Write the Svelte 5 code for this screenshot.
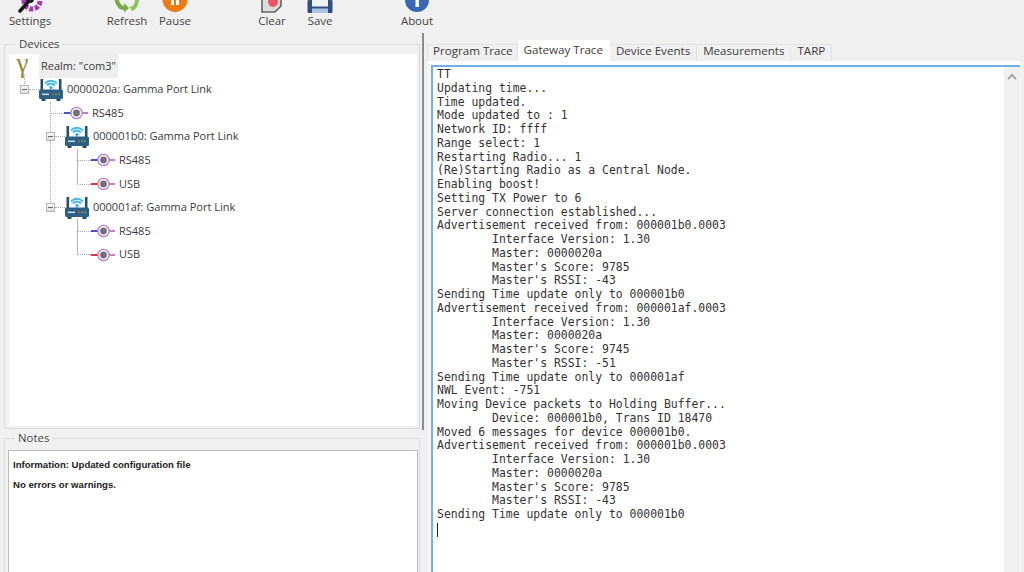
<script>
  const trace = [
    "TT",
    "Updating time...",
    "Time updated.",
    "Mode updated to : 1",
    "Network ID: ffff",
    "Range select: 1",
    "Restarting Radio... 1",
    "(Re)Starting Radio as a Central Node.",
    "Enabling boost!",
    "Setting TX Power to 6",
    "Server connection established...",
    "Advertisement received from: 000001b0.0003",
    "\tInterface Version: 1.30",
    "\tMaster: 0000020a",
    "\tMaster's Score: 9785",
    "\tMaster's RSSI: -43",
    "Sending Time update only to 000001b0",
    "Advertisement received from: 000001af.0003",
    "\tInterface Version: 1.30",
    "\tMaster: 0000020a",
    "\tMaster's Score: 9745",
    "\tMaster's RSSI: -51",
    "Sending Time update only to 000001af",
    "NWL Event: -751",
    "Moving Device packets to Holding Buffer...",
    "\tDevice: 000001b0, Trans ID 18470",
    "Moved 6 messages for device 000001b0.",
    "Advertisement received from: 000001b0.0003",
    "\tInterface Version: 1.30",
    "\tMaster: 0000020a",
    "\tMaster's Score: 9785",
    "\tMaster's RSSI: -43",
    "Sending Time update only to 000001b0"
  ];
  const tabs = ["Program Trace", "Gateway Trace", "Device Events", "Measurements", "TARP"];
  const gateways = [
    { name: "000001b0: Gamma Port Link", ports: ["RS485", "USB"] },
    { name: "000001af: Gamma Port Link", ports: ["RS485", "USB"] }
  ];
</script>

{#snippet router()}
  <svg class="ico" width="24" height="23" viewBox="0 0 24 23">
    <path d="M6 5.5 Q12 0 18 5.5" fill="none" stroke="#45b6ea" stroke-width="2" />
    <path d="M8 7.5 Q12 3.6 16 7.5" fill="none" stroke="#45b6ea" stroke-width="2" />
    <path d="M9.8 9.4 L12 7.6 L14.2 9.4 L12 12Z" fill="#45b6ea" />
    <rect x="1.5" y="1" width="2.6" height="12" fill="#23506f" />
    <rect x="19.9" y="1" width="2.6" height="12" fill="#23506f" />
    <rect x="0" y="11.5" width="24" height="9.5" rx="1.5" fill="#2f5f85" />
    <rect x="2.5" y="21" width="4" height="2" fill="#23506f" />
    <rect x="17.5" y="21" width="4" height="2" fill="#23506f" />
    <rect x="3" y="15.5" width="7" height="1.6" fill="#c4dbe9" />
    <circle cx="14" cy="16.3" r="1" fill="#c9584a" />
    <circle cx="17" cy="16.3" r="1" fill="#63a85c" />
    <circle cx="20" cy="16.3" r="1" fill="#63a85c" />
  </svg>
{/snippet}

{#snippet port(color)}
  <svg class="ico" width="24" height="14" viewBox="0 0 24 14">
    <line x1="0" y1="7" x2="9" y2="7" stroke={color} stroke-width="2" />
    <line x1="18" y1="7" x2="24" y2="7" stroke="#a94bb0" stroke-width="1.4" />
    <circle cx="12.5" cy="7" r="5.6" fill="#fff" stroke="#b878c0" stroke-width="1.3" />
    <circle cx="12.5" cy="7" r="3.4" fill="#70707a" />
  </svg>
{/snippet}

{#snippet node(label, color)}
  <div class="row port">
    <span class="hook"></span>
    {@render port(color)}
    <span class="label">{label}</span>
  </div>
{/snippet}

<div class="window">
  <header class="toolbar">
    <div class="tool settings">
      <svg width="26" height="13" viewBox="0 0 26 13">
        <circle cx="15" cy="1" r="8" fill="none" stroke="#a23bb5" stroke-width="5" stroke-dasharray="4 1.6" />
        <path d="M3 11 L12 1" stroke="#1a1a1a" stroke-width="3.6" stroke-linecap="round" />
        <circle cx="13" cy="-1" r="4" fill="#1a1a1a" />
      </svg>
      <span>Settings</span>
    </div>
    <div class="tool refresh">
      <svg width="26" height="13" viewBox="0 0 26 13">
        <path d="M0.5 0 L5 0 Q6 5 10 6 L10 3 L15 8 L10 12.5 L10 10 Q3 10 0.5 0Z" fill="#76ad43" />
        <path d="M25 0 L21 0 Q21 5 17 7 L15 6 L18 11 Q24 9 25 0Z" fill="#8fc25b" />
      </svg>
      <span>Refresh</span>
    </div>
    <div class="tool pause">
      <svg width="26" height="13" viewBox="0 0 26 13">
        <circle cx="13" cy="-0.5" r="12.5" fill="#ee7a12" />
        <rect x="9" y="0" width="3" height="5" fill="#fff" />
        <rect x="14" y="0" width="3" height="5" fill="#fff" />
      </svg>
      <span>Pause</span>
    </div>
    <div class="tool clear">
      <svg width="24" height="13" viewBox="0 0 24 13">
        <path d="M2 0 V12 H15 L21 6 V0" fill="#dcdcdc" stroke="#666" stroke-width="1.6" />
        <circle cx="13" cy="2" r="5" fill="#e85562" />
      </svg>
      <span>Clear</span>
    </div>
    <div class="tool save">
      <svg width="26" height="13" viewBox="0 0 26 13">
        <rect x="0.5" y="0" width="25" height="13" rx="1" fill="#34507f" />
        <rect x="5" y="0" width="16" height="6.5" fill="#eef3f8" />
        <rect x="5" y="8.5" width="16" height="4.5" fill="#a9c4e4" />
      </svg>
      <span>Save</span>
    </div>
    <div class="tool about">
      <svg width="26" height="13" viewBox="0 0 26 13">
        <circle cx="13" cy="0" r="12" fill="#3a67b4" />
        <rect x="11.5" y="0" width="3.4" height="7" fill="#fff" />
      </svg>
      <span>About</span>
    </div>
  </header>

  <main class="panes">
    <div class="left">
      <fieldset class="group devices">
        <legend>Devices</legend>
        <div class="tree">
          <div class="row realm">
            <span class="gamma">γ</span>
            <span class="realm-label">Realm: "com3"</span>
          </div>
          <div class="row gw top-gw">
            <span class="box"></span>
            {@render router()}
            <span class="label">0000020a: Gamma Port Link</span>
          </div>
          <div class="level1">
            {@render node("RS485", "#4455c4")}
            {#each gateways as gw}
              <div class="row gw">
                <span class="box"></span>
                {@render router()}
                <span class="label">{gw.name}</span>
              </div>
              <div class="level2">
                {@render node(gw.ports[0], "#4455c4")}
                {@render node(gw.ports[1], "#e5343c")}
              </div>
            {/each}
          </div>
        </div>
      </fieldset>
      <fieldset class="group notes">
        <legend>Notes</legend>
        <div class="notes-box">
          <p>Information: Updated configuration file</p>
          <p>No errors or warnings.</p>
        </div>
      </fieldset>
    </div>

    <div class="splitter"></div>

    <section class="right">
      <div class="tabs">
        {#each tabs as tab}
          <div class="tab" class:active={tab === "Gateway Trace"}>{tab}</div>
        {/each}
      </div>
      <div class="page">
        <div class="console">
          <div class="log">
            {#each trace as line}
              <div class="line">{line}</div>
            {/each}
            <div class="caret"></div>
          </div>
          <div class="scroll">
            <svg width="14" height="10" viewBox="0 0 14 10">
              <path d="M3 7 L7 3 L11 7" fill="none" stroke="#a6a6a6" stroke-width="2" />
            </svg>
          </div>
        </div>
      </div>
    </section>
  </main>
</div>

<style>
  :global(body) {
    margin: 0;
    background: #f0f0f0;
    overflow: hidden;
  }

  .window {
    width: 1024px;
    height: 572px;
    display: flex;
    flex-direction: column;
    overflow: hidden;
    background: #f0f0f0;
    color: #333;
    font-family: "Open Sans", "Liberation Sans", sans-serif;
    font-size: 11px;
  }

  .toolbar {
    height: 33px;
    flex: none;
    display: flex;
    align-items: flex-start;
    padding-left: 6px;
  }

  .tool {
    width: 48px;
    flex: none;
    display: flex;
    flex-direction: column;
    align-items: center;
    line-height: 15px;
    font-size: 11.4px;
    color: #444;
  }

  .tool svg {
    display: block;
  }

  .refresh,
  .clear,
  .about {
    margin-left: 49px;
  }

  .panes {
    flex: 1;
    display: flex;
    min-height: 0;
  }

  .left {
    width: 420px;
    flex: none;
    display: flex;
    flex-direction: column;
    padding: 4px 0 0 4px;
    box-sizing: border-box;
  }

  .group {
    margin: 0;
    border: 1px solid #dcdcdc;
    min-width: 0;
    box-sizing: border-box;
  }

  legend {
    padding: 0 3px;
    margin-left: 7px;
    font-size: 11.4px;
    line-height: 14px;
    color: #444;
  }

  .devices {
    height: 392px;
    flex: none;
    padding: 3px 2px 3px 4px;
  }

  .tree {
    height: 372px;
    background: #fff;
    color: #3a3a3a;
  }

  .row {
    display: flex;
    align-items: center;
    position: relative;
  }

  .realm {
    height: 24px;
  }

  .realm::after {
    content: "";
    position: absolute;
    left: 15px;
    top: 21px;
    height: 11px;
    border-left: 1px dotted #aaa;
  }

  .gamma {
    width: 27px;
    flex: none;
    text-align: center;
    font-family: "Liberation Serif", serif;
    font-size: 27px;
    line-height: 24px;
    color: #93893a;
    position: relative;
    top: -3px;
  }

  .realm-label {
    background: #eeeeee;
    height: 24px;
    line-height: 24px;
    padding: 0 2px;
    margin-left: 3px;
  }

  .gw,
  .port {
    height: 23.57px;
  }

  .top-gw {
    padding-left: 11px;
  }

  .box {
    width: 7px;
    height: 7px;
    border: 1px solid #b5b5b5;
    background: linear-gradient(#f8f8f8, #dddddd);
    flex: none;
    margin-right: 10px;
    position: relative;
    z-index: 1;
  }

  .box::before {
    content: "";
    position: absolute;
    left: 8px;
    top: 3px;
    width: 10px;
    border-top: 1px dotted #aaa;
  }

  .box::after {
    content: "";
    position: absolute;
    left: 1px;
    top: 3px;
    width: 5px;
    height: 1px;
    background: #667;
  }

  .ico {
    flex: none;
    display: block;
  }

  .label {
    margin-left: 4px;
    padding-bottom: 2px;
    white-space: nowrap;
  }

  .level1 {
    margin-left: 41px;
    border-left: 1px dotted #aaa;
    height: 106px;
  }

  .level1 > .gw {
    margin-left: -5px;
  }

  .level2 {
    margin-left: 26px;
    border-left: 1px solid #b5b5b5;
    height: 35.35px;
    margin-bottom: 11.8px;
  }

  .hook {
    width: 13px;
    height: 0;
    flex: none;
    border-top: 1px dotted #aaa;
  }

  .notes {
    flex: 1;
    min-height: 0;
    margin-top: 2px;
    padding: 5px 1px 0 3px;
    border-bottom: none;
  }

  .notes-box {
    height: 130px;
    background: #fff;
    border: 1px solid #bcbcbc;
    box-sizing: border-box;
    padding: 8px 4px;
    font-family: "Liberation Sans", sans-serif;
    font-weight: 700;
    font-size: 9.6px;
    color: #222;
  }

  .notes-box p {
    margin: 0 0 8px;
    line-height: 12px;
  }

  .splitter {
    width: 2px;
    height: 397px;
    flex: none;
    margin-left: 2px;
    background: #8c8c8c;
  }

  .right {
    flex: 1;
    min-width: 0;
    padding: 7px 3px 0;
    display: flex;
    flex-direction: column;
  }

  .tabs {
    display: flex;
    height: 21px;
    align-items: flex-end;
  }

  .tab {
    height: 16px;
    line-height: 12px;
    padding: 0 6px;
    background: #f0f0f0;
    border-top: 1px solid #e2e2e2;
    border-right: 1px solid #e2e2e2;
    color: #3c3c3c;
    font-size: 11.6px;
  }

  .tab:first-child {
    padding: 0 4px 0 5px;
    border-left: 1px solid #e2e2e2;
  }

  .tab.active {
    height: 20px;
    line-height: 17px;
    background: #fff;
    border-top-color: #fff;
    border-right-color: #fff;
  }

  .page {
    flex: 1;
    min-height: 0;
    display: flex;
    padding: 4px 1px 0 4px;
    background: linear-gradient(#fff 4px, #f5f5f5 4px);
  }

  .console {
    flex: 1;
    display: flex;
    min-height: 0;
    background: #fff;
    border-top: 2px solid #6fb0e6;
    border-left: 2px solid #6fb0e6;
  }

  .log {
    flex: 1;
    padding: 1px 4px;
    font-family: "DejaVu Sans Mono", monospace;
    font-size: 11.43px;
    line-height: 13.75px;
    color: #333;
  }

  .line {
    white-space: pre;
    tab-size: 8;
  }

  .caret {
    width: 1px;
    height: 14px;
    margin-top: 1px;
    background: #222;
  }

  .scroll {
    width: 16px;
    flex: none;
    background: #f0f0f0;
    display: flex;
    justify-content: center;
    align-items: flex-start;
    padding-top: 5px;
    padding-right: 1px;
    box-sizing: border-box;
  }
</style>
